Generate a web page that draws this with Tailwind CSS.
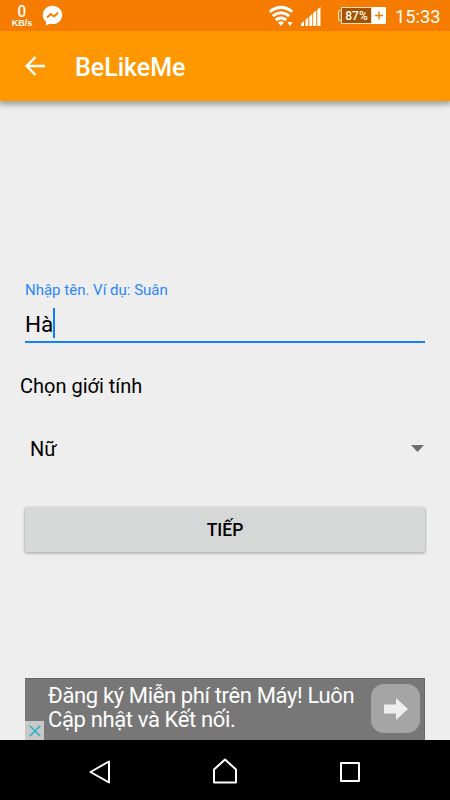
<!DOCTYPE html>
<html lang="vi">
<head>
<meta charset="utf-8">
<title>BeLikeMe</title>
<script src="https://cdn.jsdelivr.net/npm/@tailwindcss/browser@4"></script>
</head>
<body class="bg-[#eeeeee]">
<div class="w-[450px] h-[800px] flex flex-col overflow-hidden bg-[#eeeeee] font-['Roboto','Noto_Sans',sans-serif] text-black whitespace-nowrap">
  <div class="h-[31px] shrink-0 bg-[#f57c00] flex items-start text-white relative z-10">
    <div class="ml-[9px] w-[26px] flex flex-col items-center">
      <span class="mt-[3px] text-[17px] leading-[16px] font-medium scale-x-90">0</span>
      <span class="text-[9px] leading-[9px] font-bold font-['Liberation_Sans',sans-serif]">KB/s</span>
    </div>
    <svg class="ml-[7px] mt-[5px]" width="22" height="22" viewBox="0 0 22 22"><path fill="#fff" d="M10.500.8C5.100.8.8 4.800.8 9.900c0 2.900 1.300 5.300 3.300 7v3.700l3.500-1.900c.9.300 1.900.4 2.900.4 5.400 0 9.700-4.100 9.700-9.200S15.900.8 10.500.8Z"/><path d="M5 12.500 8.800 9l3.200 2.500 4-3.800" fill="none" stroke="#f57c00" stroke-width="1.900"/></svg>
    <svg class="ml-[205px] mt-[5px]" width="54" height="22" viewBox="0 0 54 22">
      <g fill="none" stroke="#fff" stroke-width="3"><path d="M.8 6.800Q12-2 23.200 6.800"/><path d="M3.800 11Q12 4.500 20.200 11"/><path d="M6.700 15Q12 11 17.300 15"/></g>
      <path fill="#fff" d="M8.900 17.200q3.100-1.700 6.200 0L12 21ZM18.500 17h5L21 21.300ZM32 21v-2.500l3-2.500v5ZM36.500 21v-6l2.700-2.500V21ZM40.300 21v-9.500l3-2.700V21ZM44.200 21V8l3-2.500V21ZM48.200 21V4.700L51.500 2v19Z"/>
    </svg>
    <div class="ml-[15px] mt-[7px] h-[17px] flex items-center">
      <span class="w-[3px] h-[11px] border border-r-0 border-white/80 rounded-l-xs"></span>
      <span class="w-[31px] h-[17px] border border-white/80 bg-[#a65300] text-[12px] leading-[16px] font-medium text-center">87%</span>
      <svg width="14" height="17" viewBox="0 0 14 17"><path fill="#fff" d="M0 0h13l1 1v15l-1 1H0Z"/><path d="M3 8.500h8M7 4.500v8" stroke="#f57c00" stroke-width="1.400"/></svg>
    </div>
    <span class="ml-[9px] mt-[5px] text-[18.300px] leading-[24px]">15:33</span>
  </div>
  <header class="h-[70px] shrink-0 bg-[#ff9800] flex items-center text-white shadow-[0_3px_5px_1px_rgba(0,0,0,0.3)]">
    <svg class="ml-[25px]" width="21" height="20" viewBox="0 0 21 20"><path d="M10.500 1 1.700 10l8.800 9M2 10h18" fill="none" stroke="#fff" stroke-width="2.500"/></svg>
    <h1 class="ml-[29px] mt-[3px] text-[25px] leading-[30px] font-medium">BeLikeMe</h1>
  </header>
  <main class="flex-1 flex flex-col">
    <div class="mt-[180px] mx-[25px] h-[62px] border-b-2 border-[#1281ff]">
      <div class="text-[15px] leading-[18px] text-[#2b86ff]">Nhập tên. Ví dụ: Suân</div>
      <div class="mt-[9px] flex h-[30px] items-center"><span class="pt-[2px] text-[22.500px] leading-[30px]">Hà</span><span class="w-[2px] h-[30px] bg-[#0a7cff]"></span></div>
    </div>
    <div class="mt-[30px] ml-[20px] text-[20px] leading-[26px]">Chọn giới tính</div>
    <div class="mt-[37px] ml-[30px] mr-[26px] h-[26px] flex items-center justify-between">
      <span class="text-[20px] leading-[26px]">Nữ</span>
      <svg class="-mt-[2px]" width="13" height="7" viewBox="0 0 13 7"><path d="M0 0h13L6.500 7Z" fill="#6d6d6d"/></svg>
    </div>
    <button class="mt-[45px] mx-[25px] h-[45px] pt-[2px] rounded-[3px] bg-[#d6d8d7] shadow-[0_1px_2px_1px_rgba(0,0,0,0.22)] text-[17.500px] font-medium">TIẾP</button>
    <div class="mt-auto mx-[25px] h-[62px] bg-[#777777] border-t border-r border-[#666] relative flex items-start text-white">
      <p class="ml-[23px] mt-[5px] flex-1 text-[22px] leading-[24px] tracking-[-0.36px]">Đăng ký Miễn phí trên Máy! Luôn<br>Cập nhật và Kết nối.</p>
      <div class="mt-[5px] mr-[4px] size-[49px] rounded-[13px] bg-[#a5a5a5] flex items-center justify-center"><svg width="24" height="22" viewBox="0 0 24 22"><path fill="#eee" d="M0 6.500h12V0l12 11-12 11v-6.500H0Z"/></svg></div>
      <div class="absolute left-0 bottom-0 size-[19px] bg-[#c8c8c8] flex items-center justify-center"><svg width="12" height="12" viewBox="0 0 12 12"><path d="m.7.7 10.600 10.600M11.300.7.700 11.300" stroke="#28b4c8" stroke-width="1.600"/></svg></div>
    </div>
  </main>
  <nav class="h-[60px] shrink-0 bg-black flex items-start">
    <svg class="ml-[88px] mt-[19px]" width="24" height="26" viewBox="0 0 24 26"><path d="M21 2.500v21L2.500 13Z" fill="none" stroke="#fff" stroke-width="2" stroke-linejoin="round"/></svg>
    <svg class="ml-[100px] mt-[17px]" width="26" height="28" viewBox="0 0 26 28"><path d="M2 12.500 13 2.500l11 10v13H2Z" fill="none" stroke="#fff" stroke-width="2" stroke-linejoin="round"/></svg>
    <svg class="ml-[101px] mt-[21px]" width="23" height="22" viewBox="0 0 23 22"><rect x="2" y="2" width="18" height="18" fill="none" stroke="#fff" stroke-width="2" stroke-linejoin="round"/></svg>
  </nav>
</div>
</body>
</html>
